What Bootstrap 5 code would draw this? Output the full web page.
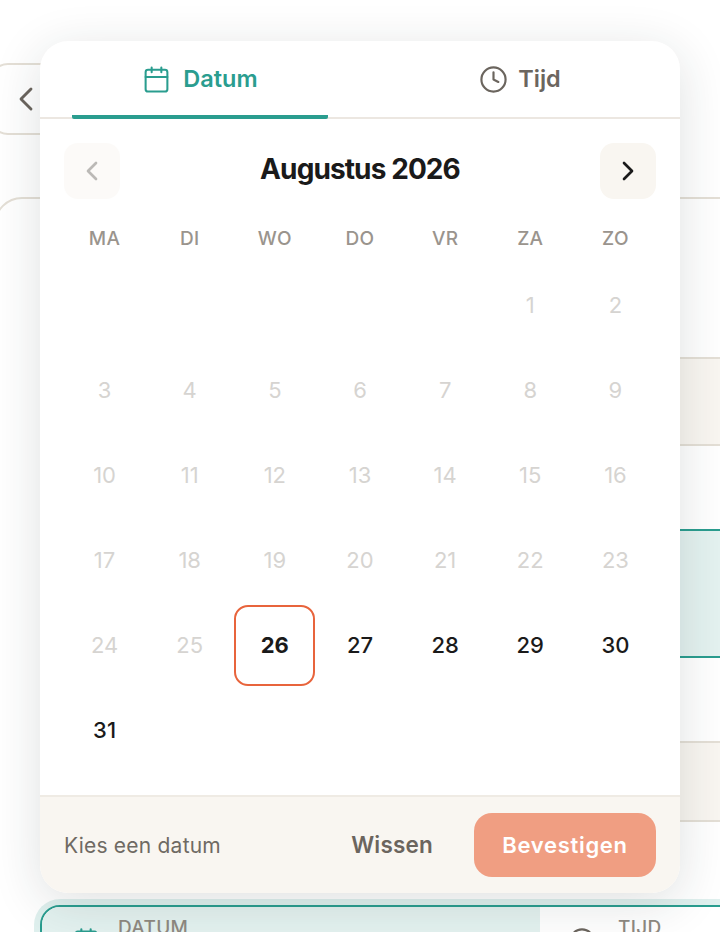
<!DOCTYPE html>
<html lang="nl">
<head>
<meta charset="utf-8">
<title>Datum kiezen</title>
<link href="https://cdn.jsdelivr.net/npm/bootstrap@5.3.0/dist/css/bootstrap.min.css" rel="stylesheet">
<style>
html,body{margin:0;height:932px;overflow:hidden;background:#fff;font-family:Inter,"Liberation Sans",sans-serif;color:#1a1a1a}
.stage{position:relative;height:932px;overflow:hidden}
.back-box{width:72px;height:72px;margin:63px 0 0 -10px;border:2px solid #e4dfd6;border-radius:18px;color:#6b655e}
.under-card{height:780px;margin:62px -40px 0 -6px;border:2px solid #e4dfd6;border-radius:28px;padding:158px 0 0 70px}
.band-a{height:89px;margin-bottom:83px;background:#f9f6f1;border-top:2px solid #e4dfd6;border-bottom:2px solid #e4dfd6}
.band-b{height:129px;margin-bottom:83px;background:#e4f2f0;border-top:2px solid #2a9d8f;border-bottom:2px solid #2a9d8f}
.band-c{height:81px;background:#f9f6f1;border-top:2px solid #e4dfd6;border-bottom:2px solid #e4dfd6}
.field-row{position:absolute;left:40px;top:905px;width:720px;height:80px;background:#fff;border:2px solid #2a9d8f;border-radius:20px;box-shadow:0 0 0 6px rgba(42,157,143,.15);overflow:hidden}
.field-date{width:498px;background:#e4f2f0;padding-left:30px;gap:18px}
.field-time{padding-left:28px;gap:22px}
.field-cap{font-size:19px;line-height:22px;font-weight:500;color:#8f8981;letter-spacing:.3px;margin-top:10px}
.field-ico{margin-top:20px;flex:none}
.popup{position:absolute;left:40px;top:41px;width:640px;height:852px;background:#fff;border-radius:28px;box-shadow:0 10px 50px rgba(30,40,40,.14);overflow:hidden}
.tabbar{height:78px;border-bottom:2px solid #ece7e1}
.tabitem{flex:1 1 0;margin:0 32px -2px;height:78px;background:none;border:0;border-bottom:4px solid transparent;border-radius:0 0 2px 2px;gap:10px;font-size:23.5px;font-weight:600;color:#6b655e;padding:2px 0 0}
.tabitem.on{color:#2a9d8f;border-bottom-color:#2a9d8f;gap:12px}
.cal-head{padding:24px 24px 0;height:80px}
.nav-box{width:56px;height:56px;border:0;border-radius:14px;background:#f9f6f1;color:#1a1a1a;padding:0}
.nav-box.off{opacity:.45;color:#6b655e}
.cal-title{font-size:28px;font-weight:700;letter-spacing:-.9px;line-height:52px}
.cal-grid{display:grid;grid-template-columns:repeat(7,1fr);gap:4px;padding:0 24px}
.wk{height:62px;text-align:center;font-size:19px;font-weight:500;color:#9a948d;letter-spacing:.3px;line-height:80px}
.dy{height:81px;display:flex;align-items:center;justify-content:center;font-size:22px;font-weight:500;border-radius:14px}
.dy.dim{color:#d6d4d1;font-weight:400}
.dy.today{border:2px solid #e8643c;font-weight:700}
.foot-bar{position:absolute;left:0;right:0;bottom:0;height:98px;background:#f9f6f1;border-top:2px solid #efebe4;padding:0 24px}
.foot-note{font-size:21px;color:#6f6a63;letter-spacing:.22px;padding-top:1px}
.foot-clear{background:none;border:0;padding:0;margin-right:41px;font-size:22.5px;font-weight:600;color:#6b655e;letter-spacing:.2px}
.foot-ok{width:182px;height:64px;border:0;border-radius:18px;background:#f09e82;color:#fff;font-size:22px;font-weight:600;letter-spacing:.7px;padding:0}
</style>
</head>
<body>
<div class="stage">
  <div class="back-box d-flex align-items-center justify-content-center">
    <svg width="40" height="40" viewBox="0 0 24 24" fill="none" stroke="currentColor" stroke-width="1.7" stroke-linecap="round" stroke-linejoin="round"><path d="m15 18-6-6 6-6"/></svg>
  </div>
  <div class="under-card">
    <div class="band-a"></div>
    <div class="band-b"></div>
    <div class="band-c"></div>
  </div>
  <div class="field-row d-flex">
    <div class="field-date d-flex">
      <svg class="field-ico" width="28" height="28" viewBox="0 0 24 24" fill="none" stroke="#2a9d8f" stroke-width="1.8" stroke-linecap="round"><path d="M8 2v4M16 2v4"/><rect x="3" y="4" width="18" height="18" rx="2"/></svg>
      <div class="field-cap">DATUM</div>
    </div>
    <div class="field-time d-flex">
      <svg class="field-ico" width="28" height="28" viewBox="0 0 24 24" fill="none" stroke="#6b655e" stroke-width="1.8"><circle cx="12" cy="12" r="10"/></svg>
      <div class="field-cap">TIJD</div>
    </div>
  </div>

  <div class="popup">
    <div class="tabbar d-flex">
      <button class="tabitem on d-flex align-items-center justify-content-center" type="button">
        <svg width="29" height="29" viewBox="0 0 24 24" fill="none" stroke="currentColor" stroke-width="1.7" stroke-linecap="round" stroke-linejoin="round"><path d="M8 2v4M16 2v4"/><rect x="3" y="4" width="18" height="18" rx="2"/><path d="M3 10h18"/></svg>
        Datum
      </button>
      <button class="tabitem d-flex align-items-center justify-content-center" type="button">
        <svg width="29" height="29" viewBox="0 0 24 24" fill="none" stroke="currentColor" stroke-width="1.8" stroke-linecap="round" stroke-linejoin="round"><circle cx="12" cy="12" r="10"/><path d="M12 6v6l4 2"/></svg>
        Tijd
      </button>
    </div>
    <div class="cal-head d-flex align-items-start justify-content-between">
      <button class="nav-box off d-flex align-items-center justify-content-center" type="button">
        <svg width="32" height="32" viewBox="0 0 24 24" fill="none" stroke="currentColor" stroke-width="2" stroke-linecap="round" stroke-linejoin="round"><path d="m15 18-6-6 6-6"/></svg>
      </button>
      <div class="cal-title">Augustus 2026</div>
      <button class="nav-box d-flex align-items-center justify-content-center" type="button">
        <svg width="32" height="32" viewBox="0 0 24 24" fill="none" stroke="currentColor" stroke-width="2" stroke-linecap="round" stroke-linejoin="round"><path d="m9 18 6-6-6-6"/></svg>
      </button>
    </div>
    <div class="cal-grid">
      <div class="wk">MA</div><div class="wk">DI</div><div class="wk">WO</div><div class="wk">DO</div><div class="wk">VR</div><div class="wk">ZA</div><div class="wk">ZO</div>
      <div class="dy"></div><div class="dy"></div><div class="dy"></div><div class="dy"></div><div class="dy"></div><div class="dy dim">1</div><div class="dy dim">2</div>
      <div class="dy dim">3</div><div class="dy dim">4</div><div class="dy dim">5</div><div class="dy dim">6</div><div class="dy dim">7</div><div class="dy dim">8</div><div class="dy dim">9</div>
      <div class="dy dim">10</div><div class="dy dim">11</div><div class="dy dim">12</div><div class="dy dim">13</div><div class="dy dim">14</div><div class="dy dim">15</div><div class="dy dim">16</div>
      <div class="dy dim">17</div><div class="dy dim">18</div><div class="dy dim">19</div><div class="dy dim">20</div><div class="dy dim">21</div><div class="dy dim">22</div><div class="dy dim">23</div>
      <div class="dy dim">24</div><div class="dy dim">25</div><div class="dy today">26</div><div class="dy">27</div><div class="dy">28</div><div class="dy">29</div><div class="dy">30</div>
      <div class="dy">31</div>
    </div>
    <div class="foot-bar d-flex align-items-center">
      <div class="foot-note me-auto">Kies een datum</div>
      <button class="foot-clear" type="button">Wissen</button>
      <button class="foot-ok" type="button">Bevestigen</button>
    </div>
  </div>
</div>
<script src="https://cdn.jsdelivr.net/npm/bootstrap@5.3.0/dist/js/bootstrap.bundle.min.js"></script>
</body>
</html>
